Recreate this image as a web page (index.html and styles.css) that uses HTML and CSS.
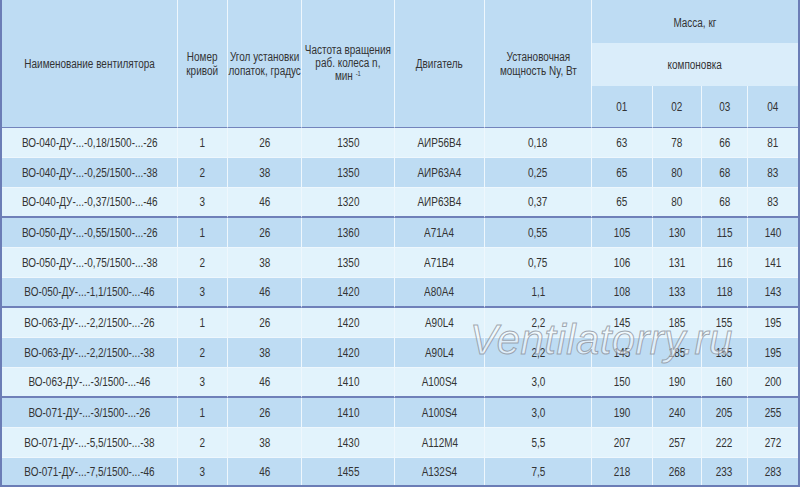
FILE: index.html
```html
<!DOCTYPE html>
<html lang="ru">
<head>
<meta charset="utf-8">
<title>Вентиляторы ВО-ДУ</title>
<link rel="stylesheet" href="styles.css">
</head>
<body>
<div class="wrap">
  <div class="grid" role="table">
    <div class="c h name"><span class="t">Наименование вентилятора</span></div>
    <div class="c h num"><span class="t">Номер<br>кривой</span></div>
    <div class="c h ang"><span class="t">Угол установки<br>лопаток, градус</span></div>
    <div class="c h freq"><span class="t">Частота вращения<br>раб. колеса n,<br>мин <sup>-1</sup></span></div>
    <div class="c h mot"><span class="t">Двигатель</span></div>
    <div class="c h pow"><span class="t">Установочная<br>мощность Ny, Вт</span></div>
    <div class="c h mass"><span class="t">Масса, кг</span></div>
    <div class="c h komp"><span class="t">компоновка</span></div>
    <div class="c h sub"><span class="t">01</span></div>
    <div class="c h sub"><span class="t">02</span></div>
    <div class="c h sub"><span class="t">03</span></div>
    <div class="c h sub last"><span class="t">04</span></div>

    <div class="c r1"><span class="t">ВО-040-ДУ-...-0,18/1500-...-26</span></div><div class="c r1"><span class="t">1</span></div><div class="c r1"><span class="t">26</span></div><div class="c r1"><span class="t">1350</span></div><div class="c r1"><span class="t">АИР56В4</span></div><div class="c r1"><span class="t">0,18</span></div><div class="c r1"><span class="t">63</span></div><div class="c r1"><span class="t">78</span></div><div class="c r1"><span class="t">66</span></div><div class="c r1 last"><span class="t">81</span></div>
    <div class="c r2"><span class="t">ВО-040-ДУ-...-0,25/1500-...-38</span></div><div class="c r2"><span class="t">2</span></div><div class="c r2"><span class="t">38</span></div><div class="c r2"><span class="t">1350</span></div><div class="c r2"><span class="t">АИР63А4</span></div><div class="c r2"><span class="t">0,25</span></div><div class="c r2"><span class="t">65</span></div><div class="c r2"><span class="t">80</span></div><div class="c r2"><span class="t">68</span></div><div class="c r2 last"><span class="t">83</span></div>
    <div class="c r1 g"><span class="t">ВО-040-ДУ-...-0,37/1500-...-46</span></div><div class="c r1 g"><span class="t">3</span></div><div class="c r1 g"><span class="t">46</span></div><div class="c r1 g"><span class="t">1320</span></div><div class="c r1 g"><span class="t">АИР63В4</span></div><div class="c r1 g"><span class="t">0,37</span></div><div class="c r1 g"><span class="t">65</span></div><div class="c r1 g"><span class="t">80</span></div><div class="c r1 g"><span class="t">68</span></div><div class="c r1 g last"><span class="t">83</span></div>

    <div class="c r2"><span class="t">ВО-050-ДУ-...-0,55/1500-...-26</span></div><div class="c r2"><span class="t">1</span></div><div class="c r2"><span class="t">26</span></div><div class="c r2"><span class="t">1360</span></div><div class="c r2"><span class="t">А71А4</span></div><div class="c r2"><span class="t">0,55</span></div><div class="c r2"><span class="t">105</span></div><div class="c r2"><span class="t">130</span></div><div class="c r2"><span class="t">115</span></div><div class="c r2 last"><span class="t">140</span></div>
    <div class="c r1"><span class="t">ВО-050-ДУ-...-0,75/1500-...-38</span></div><div class="c r1"><span class="t">2</span></div><div class="c r1"><span class="t">38</span></div><div class="c r1"><span class="t">1350</span></div><div class="c r1"><span class="t">А71В4</span></div><div class="c r1"><span class="t">0,75</span></div><div class="c r1"><span class="t">106</span></div><div class="c r1"><span class="t">131</span></div><div class="c r1"><span class="t">116</span></div><div class="c r1 last"><span class="t">141</span></div>
    <div class="c r2 g"><span class="t">ВО-050-ДУ-...-1,1/1500-...-46</span></div><div class="c r2 g"><span class="t">3</span></div><div class="c r2 g"><span class="t">46</span></div><div class="c r2 g"><span class="t">1420</span></div><div class="c r2 g"><span class="t">А80А4</span></div><div class="c r2 g"><span class="t">1,1</span></div><div class="c r2 g"><span class="t">108</span></div><div class="c r2 g"><span class="t">133</span></div><div class="c r2 g"><span class="t">118</span></div><div class="c r2 g last"><span class="t">143</span></div>

    <div class="c r1"><span class="t">ВО-063-ДУ-...-2,2/1500-...-26</span></div><div class="c r1"><span class="t">1</span></div><div class="c r1"><span class="t">26</span></div><div class="c r1"><span class="t">1420</span></div><div class="c r1"><span class="t">А90L4</span></div><div class="c r1"><span class="t">2,2</span></div><div class="c r1"><span class="t">145</span></div><div class="c r1"><span class="t">185</span></div><div class="c r1"><span class="t">155</span></div><div class="c r1 last"><span class="t">195</span></div>
    <div class="c r2"><span class="t">ВО-063-ДУ-...-2,2/1500-...-38</span></div><div class="c r2"><span class="t">2</span></div><div class="c r2"><span class="t">38</span></div><div class="c r2"><span class="t">1420</span></div><div class="c r2"><span class="t">А90L4</span></div><div class="c r2"><span class="t">2,2</span></div><div class="c r2"><span class="t">145</span></div><div class="c r2"><span class="t">185</span></div><div class="c r2"><span class="t">155</span></div><div class="c r2 last"><span class="t">195</span></div>
    <div class="c r1 g"><span class="t">ВО-063-ДУ-...-3/1500-...-46</span></div><div class="c r1 g"><span class="t">3</span></div><div class="c r1 g"><span class="t">46</span></div><div class="c r1 g"><span class="t">1410</span></div><div class="c r1 g"><span class="t">А100S4</span></div><div class="c r1 g"><span class="t">3,0</span></div><div class="c r1 g"><span class="t">150</span></div><div class="c r1 g"><span class="t">190</span></div><div class="c r1 g"><span class="t">160</span></div><div class="c r1 g last"><span class="t">200</span></div>

    <div class="c r2"><span class="t">ВО-071-ДУ-...-3/1500-...-26</span></div><div class="c r2"><span class="t">1</span></div><div class="c r2"><span class="t">26</span></div><div class="c r2"><span class="t">1410</span></div><div class="c r2"><span class="t">А100S4</span></div><div class="c r2"><span class="t">3,0</span></div><div class="c r2"><span class="t">190</span></div><div class="c r2"><span class="t">240</span></div><div class="c r2"><span class="t">205</span></div><div class="c r2 last"><span class="t">255</span></div>
    <div class="c r1"><span class="t">ВО-071-ДУ-...-5,5/1500-...-38</span></div><div class="c r1"><span class="t">2</span></div><div class="c r1"><span class="t">38</span></div><div class="c r1"><span class="t">1430</span></div><div class="c r1"><span class="t">А112М4</span></div><div class="c r1"><span class="t">5,5</span></div><div class="c r1"><span class="t">207</span></div><div class="c r1"><span class="t">257</span></div><div class="c r1"><span class="t">222</span></div><div class="c r1 last"><span class="t">272</span></div>
    <div class="c r2 end"><span class="t">ВО-071-ДУ-...-7,5/1500-...-46</span></div><div class="c r2 end"><span class="t">3</span></div><div class="c r2 end"><span class="t">46</span></div><div class="c r2 end"><span class="t">1455</span></div><div class="c r2 end"><span class="t">А132S4</span></div><div class="c r2 end"><span class="t">7,5</span></div><div class="c r2 end"><span class="t">218</span></div><div class="c r2 end"><span class="t">268</span></div><div class="c r2 end"><span class="t">233</span></div><div class="c r2 end last"><span class="t">283</span></div>
  </div>
  <div class="watermark">Ventilatorry.ru</div>
</div>
</body>
</html>
```
FILE: styles.css
```css
html, body {
  margin: 0;
  padding: 0;
  background: #ffffff;
}
body {
  width: 800px;
  height: 487px;
  overflow: hidden;
  font-family: "Liberation Sans", Arial, sans-serif;
  font-size: 12px;
  color: #333;
}
.wrap {
  position: relative;
  width: 800px;
  height: 487px;
}
.grid {
  box-sizing: border-box;
  width: 800px;
  height: 487px;
  display: grid;
  grid-template-columns: 176px 50px 74px 93px 90px 107px 61px 49px 46px 50px;
  grid-template-rows: 43px 43px 42px repeat(11, 30px) 27px;
  border-left: 2px solid #6b7db6;
  border-right: 2px solid #6b7db6;
  border-bottom: 2px solid #6b7db6;
}
.c {
  box-sizing: border-box;
  display: flex;
  align-items: center;
  justify-content: center;
  text-align: center;
  line-height: 14px;
  border-right: 1px solid #eef7fd;
  border-bottom: 1px solid #eef7fd;
  white-space: nowrap;
  overflow: hidden;
}
.t {
  display: inline-block;
  flex: none;
  transform: scaleX(0.83);
  transform-origin: 50% 50%;
}
.c.last { border-right: none; }
.h { background: #bedcf3; }
.name { grid-column: 1; grid-row: 1 / 4; }
.num { grid-column: 2; grid-row: 1 / 4; }
.ang { grid-column: 3; grid-row: 1 / 4; }
.freq { grid-column: 4; grid-row: 1 / 4; line-height: 13px; }
.mot { grid-column: 5; grid-row: 1 / 4; }
.pow { grid-column: 6; grid-row: 1 / 4; }
.mass { grid-column: 7 / 11; grid-row: 1; border-right: none; border-bottom: none; padding-top: 3px; }
.komp { grid-column: 7 / 11; grid-row: 2; background: #daedfa; border-right: none; border-bottom: none; }
.sub { grid-row: 3; }
.name, .num, .ang, .freq, .mot, .pow, .sub {
  border-bottom: 1px solid #7384bc;
}
sup {
  font-size: 7px;
  line-height: 0;
  vertical-align: 4px;
}
.r1 { background: #e2f3fc; }
.r2 { background: #bedcf3; }
.g { border-bottom: 2px solid #6f80b9; }
.end { border-bottom: none; }
.watermark {
  position: absolute;
  left: 470px;
  top: 319px;
  font-family: "Liberation Sans", Arial, sans-serif;
  font-style: italic;
  font-size: 42px;
  line-height: 42px;
  letter-spacing: 0.4px;
  color: rgba(255, 255, 255, 0.5);
  -webkit-text-stroke: 1px rgba(135, 140, 150, 0.75);
  pointer-events: none;
  white-space: nowrap;
}
```
